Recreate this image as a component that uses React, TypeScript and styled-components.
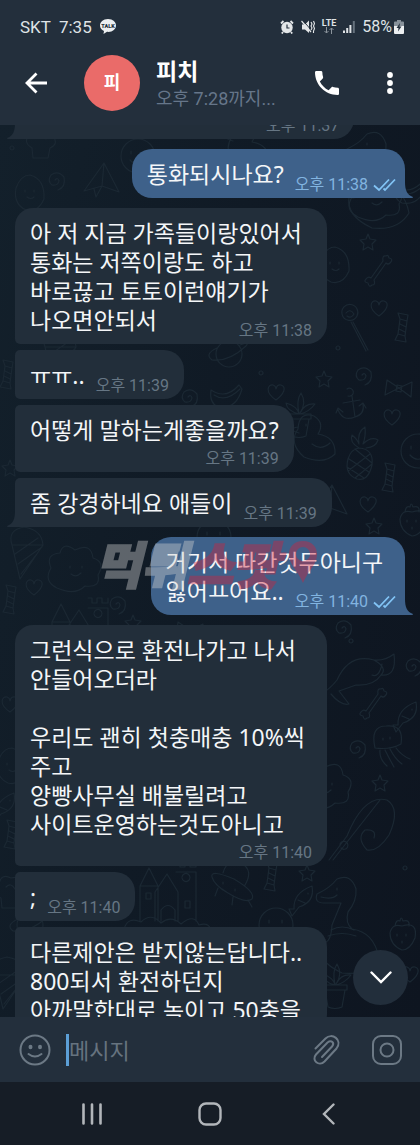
import React from "react";
import styled, { createGlobalStyle, css } from "styled-components";

const fontStack = `Roboto, "Noto Sans CJK KR", sans-serif`;
const messageFontStack = `"Noto Sans", "Noto Sans CJK KR", sans-serif`;

const GlobalStyle = createGlobalStyle`
  *, *::before, *::after { box-sizing: border-box; }
  body { margin: 0; background: #0f1822; font-family: ${fontStack}; }
  button { border: 0; padding: 0; background: none; color: inherit; font: inherit; cursor: pointer; }
`;

const Screen = styled.div`
  display: flex;
  flex-direction: column;
  height: 100vh;
  color: #fff;
`;

const TopArea = styled.header`
  flex: none;
  background: #232f3c;
`;

const StatusBar = styled.div`
  display: flex;
  align-items: center;
  justify-content: space-between;
  height: 41px;
  padding: 12px 16px 0 20px;
  font-size: 17px;
  line-height: 20px;
  color: #dfe3e6;
`;

const StatusGroup = styled.div<{ $gap: number }>`
  display: flex;
  align-items: center;
  gap: ${(p) => p.$gap}px;
`;

const Lte = styled.span`
  display: flex;
  flex-direction: column;
  align-items: center;
  font-size: 9px;
  font-weight: 700;
  line-height: 8px;
`;

const Battery = styled.span`
  display: flex;
  align-items: center;
  gap: 2px;
  font-size: 16px;
`;

const ChatHeader = styled.div`
  display: flex;
  align-items: center;
  height: 84px;
  padding: 0 14px 0 20px;
`;

const IconButton = styled.button<{ $color?: string }>`
  display: flex;
  flex: none;
  align-items: center;
  justify-content: center;
  width: 32px;
  height: 32px;
  color: ${(p) => p.$color ?? "#fff"};
`;

const Avatar = styled.div`
  display: flex;
  flex: none;
  align-items: center;
  justify-content: center;
  width: 56px;
  height: 56px;
  margin: 0 16px 0 32px;
  border-radius: 50%;
  background: #ea6b69;
  font-size: 18px;
  font-weight: 700;
  line-height: 24px;
`;

const Peer = styled.div`
  flex: 1;
  min-width: 0;
  padding-top: 4px;
`;

const PeerName = styled.h1`
  margin: 0;
  font-size: 23px;
  font-weight: 700;
  line-height: 28px;
`;

const LastSeen = styled.p`
  margin: 0;
  overflow: hidden;
  color: #66768a;
  font-size: 18px;
  line-height: 24px;
  white-space: nowrap;
`;

const HeaderActions = styled.div`
  display: flex;
  gap: 31px;
`;

const ChatArea = styled.main`
  position: relative;
  flex: 1;
  min-height: 0;
  overflow: hidden;
  background: linear-gradient(100deg, #13202b 0%, #101a25 45%, #0e1520 100%);
`;

const Wallpaper = styled.svg`
  position: absolute;
  inset: 0;
  width: 100%;
  height: 100%;
  fill: none;
  stroke: #1b2833;
  stroke-width: 1.2;
  stroke-linecap: round;
  stroke-linejoin: round;
`;

const MessageList = styled.ol`
  position: relative;
  display: flex;
  flex-direction: column;
  gap: 6px;
  margin: -35px 0 0;
  padding: 0 15px;
  list-style: none;
`;

const Bubble = styled.li<{
  $out?: boolean;
  $first?: boolean;
  $last?: boolean;
  $minWidth?: string;
}>`
  position: relative;
  display: flex;
  flex-direction: column;
  justify-content: flex-end;
  align-self: ${(p) => (p.$out ? "flex-end" : "flex-start")};
  padding: 11px 15px 4px;
  min-width: ${(p) => p.$minWidth ?? "0"};
  min-height: 49px;
  background: ${(p) => (p.$out ? "#3e618a" : "#222e3a")};
  border-radius: ${(p) =>
    p.$out
      ? "20px 20px 0 20px"
      : `${p.$first ? 18 : 5}px 20px 20px ${p.$last ? 0 : 5}px`};
  ${(p) =>
    p.$first &&
    css`
      margin-top: 4px;
    `}
`;

const BubbleText = styled.p`
  margin: 0;
  color: #f4f6f8;
  font-family: ${messageFontStack};
  font-size: 23px;
  line-height: 29px;
  white-space: pre;
`;

const LastLine = styled.div`
  display: flex;
  align-items: flex-end;
  justify-content: space-between;
  gap: 11px;
  ${BubbleText} {
    margin-bottom: 5px;
  }
`;

const Meta = styled.span<{ $out?: boolean; $below?: boolean }>`
  display: flex;
  align-items: center;
  align-self: flex-end;
  gap: 5px;
  margin: ${(p) => (p.$below ? 5 : 0)}px ${(p) => (p.$out ? -7 : 0)}px 0 auto;
  color: ${(p) => (p.$out ? "#82b4e0" : "#667684")};
  font-size: 16px;
  line-height: 18px;
  white-space: nowrap;
`;

const Tail = styled.svg<{ $out?: boolean }>`
  position: absolute;
  bottom: 0;
  width: 8px;
  height: 16px;
  ${(p) =>
    p.$out
      ? css`
          left: 100%;
          fill: #3e618a;
        `
      : css`
          right: 100%;
          fill: #222e3a;
          transform: scaleX(-1);
        `}
`;

const Watermark = styled.div`
  position: absolute;
  top: 409px;
  left: 95px;
  display: flex;
  align-items: center;
  color: #d2d2d2;
  font-family: "Noto Sans CJK KR", sans-serif;
  font-size: 50px;
  font-style: italic;
  font-weight: 900;
  line-height: 56px;
  opacity: 0.4;
  pointer-events: none;
  -webkit-text-stroke: 2px currentColor;
`;

const WatermarkAccent = styled.span`
  margin-right: 10px;
  color: #d3213c;
`;

const ScrollButton = styled.button`
  position: absolute;
  right: 12px;
  bottom: 12px;
  display: flex;
  align-items: center;
  justify-content: center;
  width: 55px;
  height: 55px;
  border-radius: 50%;
  background: #222e3b;
  color: #fff;
`;

const Composer = styled.form`
  display: flex;
  flex: none;
  align-items: center;
  height: 65px;
  padding: 0 17px 0 19px;
  background: #232f3c;
`;

const Caret = styled.span`
  flex: none;
  width: 3px;
  height: 32px;
  margin-left: 15px;
  background: #5c9fd6;
`;

const MessageInput = styled.input`
  flex: 1;
  min-width: 0;
  height: 40px;
  padding: 4px 0 0;
  border: 0;
  outline: 0;
  background: none;
  color: #fff;
  font-family: ${fontStack};
  font-size: 22px;
  &::placeholder {
    color: #66737f;
    opacity: 1;
  }
`;

const ComposerActions = styled.div`
  display: flex;
  gap: 28px;
`;

const NavBar = styled.nav`
  display: grid;
  flex: none;
  grid-template-columns: repeat(3, 1fr);
  justify-items: center;
  align-items: center;
  height: 63px;
  padding: 0 33px;
  background: #161d26;
`;

type Message = {
  text?: string;
  time?: string;
  out?: boolean;
  first?: boolean;
  last?: boolean;
  timeBelow?: boolean;
  minWidth?: string;
};

const messages: Message[] = [
  { time: "오후 11:37", last: true, timeBelow: true, minWidth: "87%" },
  { text: "통화되시나요?", time: "오후 11:38", out: true, first: true, last: true },
  {
    text: "아 저 지금 가족들이랑있어서\n통화는 저쪽이랑도 하고\n바로끊고 토토이런얘기가\n나오면안되서",
    time: "오후 11:38",
    first: true,
    minWidth: "80%",
  },
  { text: "ㅠㅠ..", time: "오후 11:39" },
  { text: "어떻게 말하는게좋을까요?", time: "오후 11:39", timeBelow: true },
  { text: "좀 강경하네요 애들이", time: "오후 11:39", last: true },
  { text: "거기서 따간것두아니구\n잃어ㅛ어요..", time: "오후 11:40", out: true, first: true, last: true },
  {
    text: "그런식으로 환전나가고 나서\n안들어오더라\n\n우리도 괜히 첫충매충 10%씩\n주고\n양빵사무실 배불릴려고\n사이트운영하는것도아니고",
    time: "오후 11:40",
    first: true,
    timeBelow: true,
    minWidth: "80%",
  },
  { text: ";", time: "오후 11:40" },
  {
    text: "다른제안은 받지않는답니다..\n800되서 환전하던지\n아까말한대로 녹이고 50충을",
    minWidth: "80%",
  },
];

function BubbleTail({ out }: { out?: boolean }) {
  return (
    <Tail $out={out} viewBox="0 0 8 16" aria-hidden="true">
      <path d="M0 0C0 8 2 13 8 15Q8 16 7 16H0Z" />
    </Tail>
  );
}

function ReadTicks() {
  return (
    <svg width="24" height="14" viewBox="0 0 24 14" fill="none" stroke="#82c4f5" strokeWidth="1.8" aria-label="읽음">
      <path d="M1 7.500L6 12L16 1.500M10.500 10.500L12 12L22 1.500" />
    </svg>
  );
}

function MessageBubble({ text = "", time, out, first, last, timeBelow, minWidth }: Message) {
  const lines = text.split("\n");
  const head = timeBelow ? text : lines.slice(0, -1).join("\n");
  const meta = time && (
    <Meta $out={out} $below={timeBelow}>
      <time>{time}</time>
      {out && <ReadTicks />}
    </Meta>
  );
  return (
    <Bubble $out={out} $first={first} $last={last} $minWidth={minWidth}>
      {head && <BubbleText>{head}</BubbleText>}
      {timeBelow ? (
        meta
      ) : (
        <LastLine>
          <BubbleText>{lines[lines.length - 1]}</BubbleText>
          {meta}
        </LastLine>
      )}
      {last && <BubbleTail out={out} />}
    </Bubble>
  );
}

const shapes: Record<string, string> = {
  heart: "M0 7C-12-1-8-9-3-8Q0-7 0-4Q1-9 5-8C11-6 8 1 0 7Z",
  star: "M0-8L2-3L8-2L4 2L5 8L0 5L-5 8L-4 2L-8-2L-2-3Z",
  bone: "M-7 8L5-9Q4-15 8-14Q10-16 11-12Q16-11 12-7Q10-5 8-7L-4 10Q-2 15-6 15Q-9 18-10 13Q-15 12-12 9Q-10 6-7 8Z",
  swirl: "M0 0Q3-3 4 1Q3 6-3 5Q-8 1-4-5Q3-10 9-3Q11 7 3 10",
  plane: "M-18 13L2-15L17 14L0 8ZM2-15L0 8L-6 19L-8 11",
  anchor: "M-4-16A4 4 0 1 1-3-9M1-9L4 12M-8-2L9-5M-13 5Q-8 17 4 12Q14 9 12-1M-15 8L-13 3L-8 7M8 1L12-2L15 3",
  pineapple:
    "M0-8Q15-7 13 9Q9 26-2 23Q-15 18-11 3Q-8-7 0-8ZM-10 3L10 16M-12 11L5 22M-4-7L13 7M11-2L-11 15M13 8L-4 22M0-8Q-10-14-7-21Q-1-16 0-12Q-2-24 6-29Q7-20 4-12Q12-20 19-16Q17-9 7-8",
  candy: "M-3-9L4-7L2 8L-5 6ZM-3-4L3-1M-4 1L2 4M-3-9L-5-15L5-13L4-7M-5 6L-8 12L3 14L2 8",
  lolli: "M-8-9A8 8 0 1 1 7-7A8 8 0 0 1-8-9M-4-10Q0-15 4-9Q1-4-3-7M3-1L18 27M1-1L16 28",
  pot: "M-12 5H12V10H-12ZM-10 10L-7 27Q0 30 7 27L10 10M0 5Q-2-3-13-6Q-12 2 0 5Q-3-9 2-16Q8-6 1 4Q6-6 16-5Q10 3 1 5",
  planet: "M-13 0A13 13 0 1 1 13 0A13 13 0 1 1-13 0M-12-6Q-25 0-17 6Q0 8 17-8Q21-13 11-9",
  cloud: "M-18 20Q-32 13-24 0Q-30-14-15-15Q-12-27 0-18Q16-26 18-10Q31-6 23 7Q26 20 10 18Q0 28-18 20ZM-5-2V0M7-2V0M-4 6Q1 10 6 5",
  cone: "M-15-10Q-20-25-3-28Q15-25 16-10L-7 24ZM-15-10L16-10M-12-1L11-17M-9 9L15-8M-6 19L9 0",
  whale: "M-38 18Q-26 10-20 2Q-8-25 17-18Q31-10 24-3Q17 8-1 7L-18 13L-8 26Q-16 28-26 16M24-3Q40-1 37-24Q28-17 17-18M15-3Q22 0 25-14",
  jelly: "M-15 2Q-20-20-4-20Q14-22 11-2Q0 4-15 2ZM-10 4Q-11 13-3 20M-5 4Q-1 12 4 21M0 3Q5 13 12 18M6 2Q12 10 20 13M-7-8V-6M0-9V-7",
  castle:
    "M-28 27V-8L-19-26L-10-8V27M-28-8H-10M-13 27V-2L-1-20L10-2V27M8-22H28V27M-7 27V16Q0 7 7 16V27M8-32H12V-27H17V-32H22V-27H28V-32M-22-1H-17V5H-22ZM14-17A4 4 0 1 1 14-16M17 7H22V14H17ZM-44 35Q-40 22-27 28Q-17 18-7 29Q3 21 13 30Q26 19 31 31Q43 27 43 40",
  ufo: "M-20-6Q-22-14 2-4Q24 9 20 16Q14 21-4 10Q-18 2-20-6ZM-9-10Q-5-25 9-20Q22-13 13 2M-14 5L-17 13M1 14L0 22M16 17L20 24M-9-1V1M3 6V8",
  fish: "M-10 11Q-11-5 8-12Q11 4-5 9L-12 18L-15 11ZM4-5V-4M-6 2L1 5",
  dino: "M-16-7Q-26-7-23-16Q-10-22-3-31Q11-37 16-21Q17-9 8 2Q5 13 12 19Q34 22 39 48Q28 66 2 63Q-24 51-21 32Q-9 37-8 15Q-3 3 1-7ZM-3-22V-20M-19-13Q-8-10-3-15M-9 20Q2 14 14 20M-12 26Q2 21 16 26",
  berry: "M0-7Q16-12 13 5Q8 17 0 17Q-12 12-12 0Q-10-10 0-7ZM-7-7Q-6-14-2-12Q-1-18 1-12Q8-14 7-7M-5 1V3M4 1V3M0 8V10",
  duck: "M-14-10Q-13-28 2-23Q13-16 6-5Q24-2 23 15Q12 26-8 18Q-24 4-14-10M-14-12Q-26-10-13-6M-6-15V-13M0 5Q9 12 18 4",
  smile: "M-17 0A17 17 0 1 1 17 0A17 17 0 1 1-17 0M-7-5V-2M6-5V-2M-8 4Q0 13 9 3",
  egg: "M0-17Q15-13 14 7Q8 21-4 18Q-17 12-14-4Q-9-17 0-17ZM-5-2V0M4-2V0M-3 5Q1 8 4 5",
  rod: "M-38 42L-20 18Q-3-24 20-18Q34-9 22 17Q11 34 0 32Q-11 20-2 12Q10 11 7 20M-34 42L13-18M-27 28A4 4 0 1 1-26 30",
  banana: "M-15-5Q0 5 13-10L16-6Q10 15-8 12Q-17 8-15-5ZM-12 0Q0 8 14-6",
  bow: "M0 0L-12-8L-14 7ZM0 0L13-6L12 9ZM-2-3L3-2L2 4L-3 3Z",
  popcorn: "M-10 8Q-20 2-12-6Q-10-17 0-12Q11-15 11-4Q17 4 8 8L6 18H-9ZM-5-3Q0-8 4-1",
  dot: "M-2 0A2 2 0 1 1 2 0A2 2 0 1 1-2 0",
};

const doodles: [string, number, number][] = [
  ["popcorn", 42, 15], ["swirl", 55, 55], ["plane", 102, 53], ["egg", 30, 67], ["smile", 138, 31],
  ["duck", 246, 22], ["dino", 370, 40], ["dot", 12, 23], ["cloud", 376, 72], ["banana", 410, 66],
  ["star", 368, 117], ["bone", 378, 145], ["heart", 379, 184], ["lolli", 350, 198], ["candy", 403, 203],
  ["egg", 335, 139], ["pot", 299, 284], ["planet", 229, 229], ["star", 324, 254], ["bow", 399, 263],
  ["swirl", 188, 272], ["banana", 226, 270], ["heart", 276, 268], ["swirl", 362, 250], ["anchor", 351, 280],
  ["candy", 8, 250], ["cone", 60, 232], ["dot", 338, 223], ["dot", 261, 248],
  ["duck", 312, 314], ["pineapple", 359, 331], ["heart", 392, 293], ["smile", 418, 326], ["candy", 390, 353],
  ["star", 10, 343], ["heart", 368, 380], ["star", 374, 401], ["berry", 412, 394], ["plane", 330, 375],
  ["cone", 27, 430], ["cloud", 75, 443], ["swirl", 116, 479], ["heart", 34, 463], ["smile", 214, 412],
  ["castle", 80, 505], ["star", 133, 498], ["candy", 11, 475], ["bow", 190, 505], ["swirl", 342, 503],
  ["whale", 357, 553], ["swirl", 412, 541], ["bone", 373, 578], ["fish", 408, 589], ["jelly", 390, 621],
  ["swirl", 356, 623], ["dot", 351, 516], ["star", 380, 658], ["cloud", 325, 660], ["rod", 367, 693],
  ["heart", 10, 580], ["fish", 6, 680], ["egg", 12, 640], ["candy", 12, 710],
  ["popcorn", 11, 765], ["castle", 168, 769], ["ufo", 232, 758], ["candy", 272, 752], ["star", 307, 748],
  ["fish", 304, 773], ["dino", 340, 785], ["berry", 402, 808], ["smile", 276, 800],
  ["planet", 30, 800], ["cone", 10, 860], ["heart", 410, 850], ["pot", 335, 855], ["dot", 405, 743],
];

function DoodleWallpaper() {
  return (
    <Wallpaper aria-hidden="true">
      {doodles.map(([kind, x, y], i) => (
        <path key={i} d={shapes[kind]} transform={`translate(${x} ${y})`} />
      ))}
    </Wallpaper>
  );
}

export default function App() {
  return (
    <>
      <GlobalStyle />
      <Screen>
        <TopArea>
          <StatusBar>
            <StatusGroup $gap={8}>
              <span>SKT</span>
              <span>7:35</span>
              <svg width="16" height="15" viewBox="0 0 16 15" aria-label="TALK">
                <path d="M8 0C3 0 0 3 0 6.500C0 9 1.500 11 4 12L3.500 15L7 12.800C12 13.500 16 10.500 16 6.500C16 3 13 0 8 0Z" fill="#eceff1" />
                <text x="8" y="9" textAnchor="middle" fontSize="5.500" fontWeight="900" fill="#232f3c">TALK</text>
              </svg>
            </StatusGroup>
            <StatusGroup $gap={7}>
              <svg width="14" height="14" viewBox="0 0 14 14" fill="none" aria-hidden="true">
                <circle cx="7" cy="7.500" r="5.700" fill="#e4e7e9" />
                <path d="M1 3.500L3.500 1M13 3.500L10.500 1M3 12L1.800 13.500M11 12L12.200 13.500" stroke="#e4e7e9" strokeWidth="1.800" />
                <path d="M7 4.500V8H9.500" stroke="#232f3c" strokeWidth="1.200" />
              </svg>
              <svg width="14" height="14" viewBox="0 0 14 14" fill="none" aria-hidden="true">
                <path d="M1 4.500H4L8 0.500V13L4 9.500H1Z" fill="#e4e7e9" />
                <path d="M1.500 0L11 11" stroke="#232f3c" strokeWidth="1" />
                <path d="M0.500 1L10 12" stroke="#e4e7e9" strokeWidth="1.200" />
                <path d="M10 2L11 4L10 6L11 8L10 10M12.500 1L13.500 3.500L12.500 6L13.500 8.500L12.500 11V13" stroke="#e4e7e9" strokeWidth="1.100" />
              </svg>
              <Lte>
                LTE
                <svg width="10" height="7" viewBox="0 0 10 7" fill="none" stroke="#8b949c" aria-hidden="true">
                  <path d="M2.500 0V6M0.500 4L2.500 6L4.500 4M7.500 7V1M5.500 3L7.500 1L9.500 3" />
                </svg>
              </Lte>
              <svg width="12" height="12" viewBox="0 0 12 12" aria-hidden="true">
                <path d="M0 9.500H2V12H0ZM3.200 7H5.200V12H3.200ZM6.400 4H8.400V12H6.400Z" fill="#dfe3e6" />
                <path d="M9.800 0H11.800V12H9.800Z" fill="#66727d" />
              </svg>
              <Battery>
                58%
                <svg width="10" height="14" viewBox="0 0 10 14" aria-hidden="true">
                  <path d="M3 0H7V1.500H9Q10 1.500 10 2.500V6H0V2.500Q0 1.500 1 1.500H3Z" fill="#87919a" />
                  <path d="M0 6H10V13Q10 14 9 14H1Q0 14 0 13Z" fill="#eceff1" />
                  <path d="M6 3L2.500 8H4.500L4 11.500L7.500 6.500H5.500Z" fill="#232f3c" />
                </svg>
              </Battery>
            </StatusGroup>
          </StatusBar>
          <ChatHeader>
            <IconButton type="button" aria-label="뒤로">
              <svg width="22" height="22" viewBox="0 0 22 22" fill="none" stroke="currentColor" strokeWidth="2.800">
                <path d="M22 11H2.500M11.500 1.500L2 11L11.500 20.500" />
              </svg>
            </IconButton>
            <Avatar>피</Avatar>
            <Peer>
              <PeerName>피치</PeerName>
              <LastSeen>오후 7:28까지...</LastSeen>
            </Peer>
            <HeaderActions>
              <IconButton type="button" aria-label="전화">
                <svg width="24" height="24" viewBox="3 3 18 18" fill="currentColor">
                  <path d="M6.620 10.790c1.440 2.830 3.760 5.140 6.590 6.590l2.200-2.200c.27-.27.67-.36 1.020-.24 1.120.37 2.330.57 3.570.57.55 0 1 .45 1 1V20c0 .55-.45 1-1 1-9.390 0-17-7.610-17-17 0-.55.45-1 1-1h3.500c.55 0 1 .45 1 1 0 1.250.2 2.450.57 3.570.11.35.03.74-.25 1.020l-2.200 2.200z" />
                </svg>
              </IconButton>
              <IconButton type="button" aria-label="메뉴">
                <svg width="6" height="22" viewBox="0 0 6 22" fill="currentColor">
                  <circle cx="3" cy="3" r="2.900" />
                  <circle cx="3" cy="11" r="2.900" />
                  <circle cx="3" cy="19" r="2.900" />
                </svg>
              </IconButton>
            </HeaderActions>
          </ChatHeader>
        </TopArea>

        <ChatArea>
          <DoodleWallpaper />
          <MessageList>
            {messages.map((m, i) => (
              <MessageBubble key={i} {...m} />
            ))}
          </MessageList>
          <Watermark aria-hidden="true">
            먹튀<WatermarkAccent>스팟</WatermarkAccent>
            <svg width="28" height="42" viewBox="0 0 28 42">
              <path
                fill="#d3213c"
                fillRule="evenodd"
                d="M14 0C5 0 0 6 0 13C0 24 8 28 14 42C20 28 28 24 28 13C28 6 23 0 14 0ZM14 6A7 7 0 1 1 14 20A7 7 0 1 1 14 6Z"
              />
            </svg>
          </Watermark>
          <ScrollButton type="button" aria-label="맨 아래로">
            <svg width="22" height="13" viewBox="0 0 22 13" fill="none" stroke="currentColor" strokeWidth="2.400" strokeLinecap="round">
              <path d="M1.500 1.500L11 11L20.500 1.500" />
            </svg>
          </ScrollButton>
        </ChatArea>

        <Composer onSubmit={(e) => e.preventDefault()}>
          <IconButton type="button" aria-label="이모티콘" $color="#6c7985">
            <svg width="32" height="32" viewBox="0 0 32 32" fill="none" stroke="currentColor" strokeWidth="2" strokeLinecap="round">
              <circle cx="16" cy="16" r="14.500" />
              <path d="M9.500 20Q16 25 22.500 20" />
              <ellipse cx="11.500" cy="13" rx="1" ry="1.300" fill="currentColor" />
              <ellipse cx="21" cy="13" rx="1" ry="1.300" fill="currentColor" />
            </svg>
          </IconButton>
          <Caret aria-hidden="true" />
          <MessageInput type="text" placeholder="메시지" aria-label="메시지" />
          <ComposerActions>
            <IconButton type="button" aria-label="첨부" $color="#6c7985">
              <svg width="28" height="32" viewBox="0 0 28 32" fill="none" stroke="currentColor" strokeWidth="2" strokeLinecap="round">
                <path d="M2.500 14.500L12.500 4.500C19 -2 30 6 23.500 14.500L11.500 27.500C6 33 -2 26.500 3 20.500L14.500 8.500C18.500 5.500 22 9 19 12.500L9 23" />
              </svg>
            </IconButton>
            <IconButton type="button" aria-label="카메라" $color="#6c7985">
              <svg width="32" height="32" viewBox="0 0 32 32" fill="none" stroke="currentColor" strokeWidth="2">
                <rect x="2" y="2" width="28" height="28" rx="8" />
                <circle cx="16" cy="16" r="6.500" />
              </svg>
            </IconButton>
          </ComposerActions>
        </Composer>

        <NavBar aria-label="시스템 탐색">
          <IconButton type="button" aria-label="최근 앱" $color="#b2b6ba">
            <svg width="22" height="22" viewBox="0 0 22 22" stroke="currentColor" strokeWidth="2.600" strokeLinecap="round">
              <path d="M2.500 1.500V20.500M11 1.500V20.500M19.500 1.500V20.500" />
            </svg>
          </IconButton>
          <IconButton type="button" aria-label="홈" $color="#b2b6ba">
            <svg width="24" height="24" viewBox="0 0 24 24" fill="none" stroke="currentColor" strokeWidth="2.400">
              <rect x="1.500" y="1.500" width="21" height="21" rx="6.500" />
            </svg>
          </IconButton>
          <IconButton type="button" aria-label="이전" $color="#b2b6ba">
            <svg width="13" height="22" viewBox="0 0 13 22" fill="none" stroke="currentColor" strokeWidth="2.400" strokeLinecap="round">
              <path d="M11.500 1.500L2 11L11.500 20.500" />
            </svg>
          </IconButton>
        </NavBar>
      </Screen>
    </>
  );
}
